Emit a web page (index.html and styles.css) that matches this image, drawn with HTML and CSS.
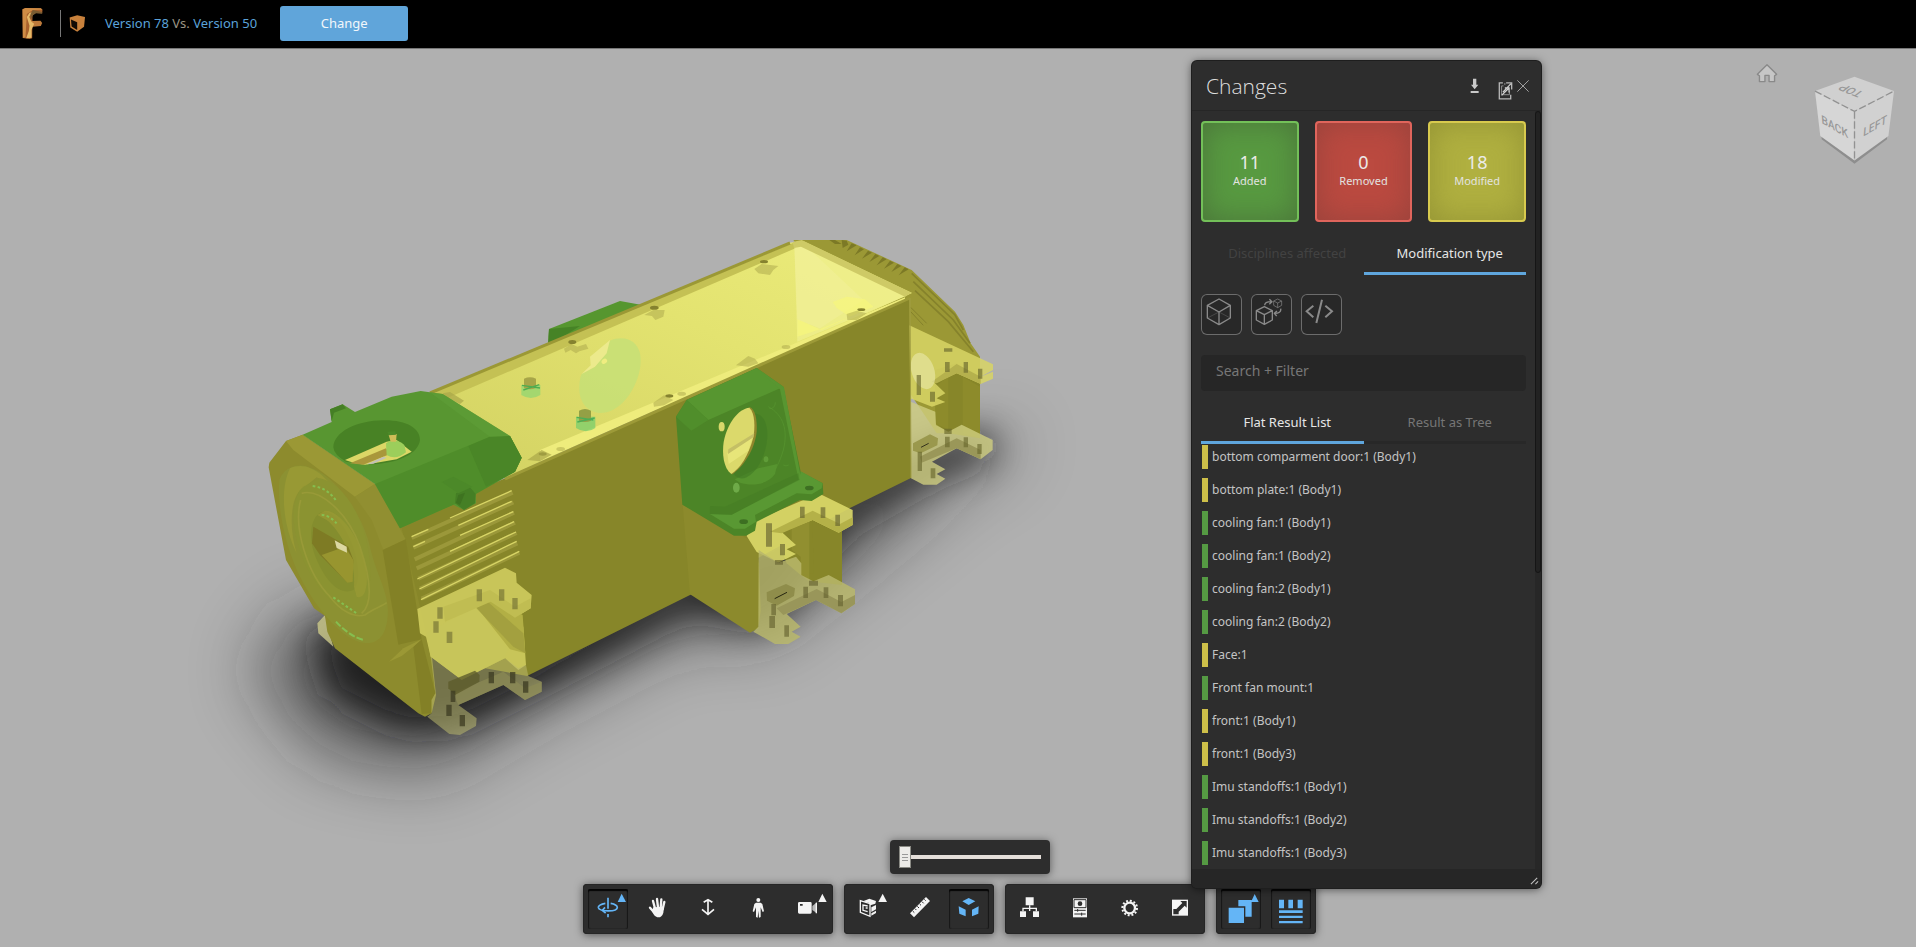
FILE: index.html
```html
<!DOCTYPE html>
<html lang="en">
<head>
<meta charset="utf-8">
<title>Version 78 Vs. Version 50</title>
<link rel="stylesheet" href="styles.css">
</head>
<body>
<header class="topbar">
  <svg class="logo" viewBox="66 22 62 96" aria-label="Fusion" role="img">
    <path fill="#a9622d" d="M67 29 76 25 122 26 127 30 126 41 104 40 97 48 96 116 88 118 68 115Z"/>
    <path fill="#cf8c45" d="M67 29 76 25 122 26 127 30 98 31 80 43 76 113 68 115Z"/>
    <path fill="#bd7a3b" d="M92 64 121 63 126 70 122 79 98 81 90 74Z"/>
    <path fill="#e5b968" d="M104 38 94 42 87 51 94 66 102 72 98 81 94 91 94 114 78 116 86 94 88 78 80 52 88 39Z"/>
    <path fill="#7a5c32" d="M98 31 126 37 126 42 108 41 98 47 92 60 91 43Z"/>
  </svg>
  <span class="rule"></span>
  <svg class="shield" viewBox="205 44 52 52" aria-hidden="true">
    <path fill="#c8813c" d="M207 52 230 45 254 50 251 80 230 95 209 82Z"/>
    <path fill="#120b05" d="M211 58 230 66 230 90 213 79Z"/>
  </svg>
  <p class="versions"><a href="#v78">Version 78</a> Vs. <a href="#v50">Version 50</a></p>
  <button class="change" type="button">Change</button>
</header>

<main class="viewer">
  <svg class="scene" viewBox="0 49 1916 898" preserveAspectRatio="xMinYMin meet" role="img" aria-label="3D model comparison">
    <defs>
      <filter id="b40" x="-40%" y="-60%" width="180%" height="220%"><feGaussianBlur stdDeviation="34"/></filter>
      <filter id="b16" x="-40%" y="-60%" width="180%" height="220%"><feGaussianBlur stdDeviation="18"/></filter>
      <linearGradient id="inner" x1="0" y1="1" x2="1" y2="0">
        <stop offset="0" stop-color="#d2d162"/><stop offset=".6" stop-color="#e3e370"/><stop offset="1" stop-color="#ecec7c"/>
      </linearGradient>
    </defs>

    <g filter="url(#b40)" opacity=".55">
      <path fill="#1c1c1c" d="M250 670 300 610 520 600 700 560 930 470 1010 430 1015 450 960 480 850 570 760 640 690 630 540 710 430 775 320 755Z"/>
    </g>
    <g filter="url(#b16)" opacity=".85">
      <path fill="#161618" d="M312 640 340 620 540 640 690 575 900 460 985 430 995 455 930 482 850 528 765 625 690 610 560 678 460 728 400 730 330 695Z"/>
    </g>

    <!-- rear green fan -->
    <path fill="#56962f" d="M549 329 620 301 642 305 640 320 548 345Z"/>
    <path fill="#468326" d="M549 329 580 326 548 346Z"/>

    <!-- rear cap -->
    <g transform="translate(540 220) scale(.33333)">
      <path fill="#9b9835" d="M760 60 920 60 1115 150 1245 275 1270 315 1292 370 1320 410 1320 640 1190 640 1110 520Z"/>
      <path fill="#7c7926" d="M868 60 885 60 905 72 885 72ZM905 60 920 62 925 74 908 84ZM935 70 950 76 920 94ZM960 82 972 88 944 106ZM984 92 996 98 966 116ZM1006 102 1018 108 988 126ZM1028 112 1040 118 1010 136ZM1050 122 1062 128 1032 146ZM1072 132 1084 138 1054 156ZM1094 142 1106 148 1076 166Z"/>
      <g fill="none" stroke="#85822b" stroke-width="5">
        <path d="M1115 160 1245 285 1270 330"/><path d="M1120 185 1240 300 1290 370"/><path d="M1125 212 1225 305 1300 395"/><path stroke-width="3" d="M1112 262 1160 310M1112 275 1150 316"/>
      </g>
      <path fill="#878629" d="M1185 450 1250 430 1320 480 1320 655 1225 640 1186 610Z"/>
      <path fill="#95932f" d="M1185 500 1225 470 1225 630 1186 610ZM1268 470 1320 500 1320 655 1268 640Z" opacity=".4"/>
      <path fill="#d8d565" fill-opacity=".85" d="M1108 316 1359 433 1359 450 1322 470 1359 455 1359 476 1322 492 1250 460 1185 490 1216 520 1190 535 1216 546 1176 560 1110 535Z"/>
      <path fill="#b5b14d" d="M1175 485 1250 432 1322 470 1322 492 1250 460 1190 490Z"/>
      <ellipse cx="1149" cy="453" rx="34" ry="56" transform="rotate(-18 1149 453)" fill="#e6e4a0" fill-opacity=".7"/>
      <path fill="#d0ce80" fill-opacity=".8" d="M1112 545 1186 575 1188 615 1225 635 1265 614 1358 660 1358 690 1322 718 1250 685 1176 725 1216 748 1190 762 1216 776 1190 794 1150 794 1113 775Z"/>
      <path fill="#9a9759" d="M1140 710 1250 655 1322 690 1322 718 1250 685 1145 728Z"/>
      <path fill="#9a984d" d="M1119 670 1170 643 1194 655 1192 676 1142 700 1119 692Z"/>
      <path stroke="#33321c" stroke-width="3" d="M1143 682 1166 670"/>
      <g fill="#69672d" fill-opacity=".65">
        <path d="M1212 385h25v10h-25zM1215 426h14v30h-14zM1271 426h13v32h-13zM1314 446h13v30h-13zM1130 465h13v60h-13zM1170 515h15v30h-15zM1213 626h22v16h-22zM1215 650h14v32h-14zM1271 652h13v30h-13zM1312 672h13v30h-13zM1133 695h13v58h-13zM1172 745h14v30h-14z"/>
      </g>
    </g>

    <!-- translucent inside of the housing -->
    <path fill="url(#inner)" d="M428 394 788 243 803 241 912 293 540 462 505 478 440 430Z"/>
    <path fill="#c4c154" d="M430 393 793 243 796 248 445 399Z"/>
    <path fill="none" stroke="#9b9835" stroke-width="3" d="M430 393 790 243"/>
    <g transform="translate(540 220) scale(.33333)">
      <path fill="#f2f194" fill-opacity=".6" d="M763 78 800 80 1098 228 772 365Z"/>
      <path fill="#f4f2a4" fill-opacity=".35" d="M800 80 970 240 840 325 772 300 763 78Z"/>
      <path fill="#ceca66" d="M758 66 785 60 1115 218 1095 230 783 80 762 84Z"/>
      <path fill="#f6f67c" fill-opacity=".7" d="M878 246 920 230 975 238 1000 260 840 328 772 350 772 298 800 310 845 330 930 290 890 264Z"/>
      <path fill="#eeec7c" d="M0 690 1095 232 1095 242 0 724Z"/>
      <path fill="#c3e078" fill-opacity=".75" d="M210 362C250 345 290 358 300 400 312 460 270 550 210 574 160 592 120 560 118 510 118 480 122 462 128 460L165 440 185 410Z"/>
      <path fill="#ecea8c" d="M150 410 210 360 200 400 165 440 125 462 152 436Z"/>
      <ellipse cx="193" cy="424" rx="9" ry="7" fill="#efed80" transform="rotate(-40 193 424)"/>
      <g fill="#85822f">
        <ellipse cx="97" cy="366" rx="12" ry="6"/><ellipse cx="343" cy="263" rx="13" ry="6"/><ellipse cx="672" cy="125" rx="12" ry="5"/><ellipse cx="964" cy="269" rx="12" ry="4"/><ellipse cx="388" cy="528" rx="12" ry="5"/><ellipse cx="8" cy="702" rx="12" ry="5"/>
      </g>
      <g fill="#aaa649" fill-opacity=".5">
        <path d="M72 386 95 372 112 380 138 372 145 386 118 394 108 400 92 390 76 398ZM313 285 340 270 374 270 370 290 346 300 336 288ZM643 147 665 132 715 138 700 150 690 165 655 160ZM920 282 950 272 980 280 950 300 922 300ZM588 436 625 408 645 416 655 430 625 440ZM340 548 372 526 400 540 372 556 342 560Z"/>
        <ellipse cx="425" cy="521" rx="13" ry="6"/><ellipse cx="738" cy="381" rx="13" ry="6"/><ellipse cx="62" cy="687" rx="13" ry="6"/>
      </g>
      <path fill="#73cd6c" fill-opacity=".7" d="M108 590h58v34q-28 20-58 0z"/>
      <path fill="#94a045" d="M117 572q18-10 36 0v30q-18 8-36 0z"/>
      <path fill="none" stroke="#4dae55" stroke-width="4" d="M110 592 160 600M112 606 164 594"/>
    </g>
    <g transform="translate(240 360) scale(.33333)">
      <path fill="#85d573" fill-opacity=".65" d="M844 75h57v30q-28 18-57 0z"/>
      <path fill="#a7a548" d="M852 56q18-8 36 0v28q-18 8-36 0z"/>
      <path fill="none" stroke="#4fac50" stroke-width="4" d="M846 76 900 84M850 90 898 74"/>
      <path fill="#aaa649" fill-opacity=".7" d="M608 100 630 96 672 122 660 132 625 115ZM862 300 905 270 935 284 900 304Z"/>
    </g>

    <!-- main face -->
    <path fill="#878629" d="M395 525 520 472 909 298 911 478 850 508 690 595 527 676 440 660 370 640Z"/>
    <path fill="none" stroke="#9d9a38" stroke-width="3" d="M505 479 910 298"/>
    <path stroke="#a19e43" stroke-width="1" d="M910 298 911 478"/>

    <!-- wing under the side fan -->
    <g transform="translate(640 340) scale(.33333)">
      <path fill="#8c8a2c" d="M128 494 330 600 356 640 362 812 355 865 330 878 150 763Z"/>
      <path fill="#878629" d="M425 560 518 520 606 560 606 735 520 725 482 705Z"/>
      <path fill="#878629" d="M400 560 518 530 520 700 482 705 440 670Z"/>
      <path fill="#9b9838" fill-opacity=".5" d="M455 560 508 535 508 725 482 705 482 650 455 630Z"/>
      <path fill="#dbd969" fill-opacity=".9" d="M320 588 350 540 490 480 540 462 638 510 638 555 596 578 518 540 425 576 468 615 440 628 468 642 415 668 350 636Z"/>
      <path fill="#b4b148" d="M390 575 518 512 600 552 638 532 638 555 596 578 518 540 425 580Z"/>
      <path fill="#b9b76b" fill-opacity=".85" d="M356 630 415 668 468 650 484 670 484 705 520 724 566 705 645 748 645 792 604 820 528 780 440 822 482 860 455 875 482 890 445 912 405 912 340 875 355 860Z"/>
      <path fill="#99965a" d="M410 805 530 747 604 786 645 765 645 792 604 820 528 780 430 825Z"/>
      <path fill="#8f8d4b" d="M380 757 438 732 465 745 462 768 410 797 381 782Z"/>
      <path stroke="#24230f" stroke-width="3" d="M404 776 441 757"/>
      <g fill="#656330" fill-opacity=".65">
        <path d="M378 550h18v70h-18zM480 500h14v34h-14zM542 502h14v32h-14zM586 524h14v34h-14zM420 612h15v34h-15zM405 660h24v14h-24zM507 722h27v15h-27zM490 740h14v34h-14zM551 742h14v32h-14zM594 765h15v34h-15zM394 792h14v34h-14zM388 828h17v36h-17zM433 856h14v34h-14z"/>
      </g>
      <path fill="#4c8527" d="M108 230 140 180 350 84 430 140 482 395 548 430 550 462 515 483 480 480 350 545 345 572 318 587 282 587 127 494Z"/>
      <path fill="#579630" d="M140 180 350 84 430 140 205 240Z"/>
      <path fill="#508e2b" d="M140 180 205 240 154 272 108 230Z"/>
      <path fill="#589631" d="M350 84 432 142 484 420 475 416 420 148Z"/>
      <path fill="#599833" d="M210 522 275 524 478 418 482 394 548 430 545 445 515 463 470 460 345 525 348 545 315 566 282 566Z"/>
      <path fill="#437b24" d="M210 498 255 500 475 400 478 420 275 524 210 522Z" opacity=".5"/>
      <path fill="#56942f" d="M284 418 355 385 412 372 405 402C385 432 340 440 300 428Z"/>
      <ellipse cx="325" cy="318" rx="52" ry="100" transform="rotate(16 325 318)" fill="#417a25" opacity=".6"/>
      <path fill="#90862c" d="M328 201C346 206 352 240 350 275 344 330 310 380 275 404Z"/>
      <path fill="#dbd96b" d="M328 203C346 220 345 265 340 292 325 350 300 385 274 402 250 385 246 340 251 306 262 248 296 206 328 203Z"/>
      <path fill="#e7e579" d="M262 340 338 292 325 332 266 372Z"/><path fill="#c4bf65" d="M265 328 343 280 340 292 264 342Z"/>
      <path fill="none" stroke="#589631" stroke-width="2" d="M385 200C430 225 445 270 430 330 420 365 405 395 385 415M388 205a14 18 0 0 0 18-18M430 375a14 14 0 0 0 16 0"/>
      <ellipse cx="245" cy="260" rx="9" ry="14" fill="#d8d76a"/><ellipse cx="289" cy="443" rx="10" ry="15" fill="#6eaa48"/><ellipse cx="378" cy="358" rx="7" ry="9" fill="#5f9c38"/>
      <ellipse cx="508" cy="444" rx="13" ry="7" fill="#3d6f22"/><ellipse cx="311" cy="545" rx="13" ry="7" fill="#3d6f22"/>
    </g>

    <g transform="translate(240 360) scale(.33333)">
      <!-- small foot behind the front plate -->
      <path fill="#c6c387" fill-opacity=".85" d="M232 790 255 765 280 860 235 820Z"/>

      <!-- front plate -->
      <path fill="#8d8b2d" d="M138 243 188 224 405 372 485 505 562 835 576 890 588 1005 575 1060 555 1070 535 1060 285 865 262 815 255 768 222 745 138 600 86 322 88 308Z"/>
      <path fill="#9b9835" d="M138 243 188 224 405 372 345 410 160 270Z"/>
      <path fill="#918f31" d="M405 372 497 538 430 570 395 480 345 410Z"/>
      <path fill="#838126" d="M428 570 497 538 545 838 475 854Z"/>
      <path fill="#838026" d="M520 860 545 838 586 1000 573 1020 573 1060 545 1062Z"/>
      <path fill="#9b9835" d="M447 905 490 865 545 838 520 860 485 888Z"/>
      <path fill="#8c9132" d="M118 360C130 320 180 305 215 325 290 350 370 470 390 560 410 650 450 700 443 770 438 830 410 855 370 848 310 840 230 750 180 650 140 570 110 450 118 360Z"/>
      <path fill="#989934" d="M150 325C180 310 215 320 245 345L270 370 230 352 195 380C150 400 145 500 170 580 130 500 118 390 150 325Z"/>
      <path fill="#8b9331" d="M190 380 240 355C310 370 370 470 385 570 395 640 392 700 375 750 330 800 240 700 200 620 155 530 145 420 190 380Z"/>
      <path fill="none" stroke="#989a38" stroke-width="5" d="M185 400C235 385 320 450 360 560 390 650 400 730 365 760M182 420C160 500 200 640 270 710 300 750 340 775 375 765 400 745 425 740 440 728"/>
      <path fill="#848d2e" d="M215 500C230 440 270 440 310 500 350 560 370 660 340 690 310 705 270 680 240 620 215 570 210 540 215 500Z"/>
      <path fill="#9a9a34" d="M232 465 255 452C300 450 370 540 380 640 384 690 370 720 350 710L342 680C350 600 300 510 260 480Z" opacity=".7"/>
      <path fill="#7e7b24" d="M220 500 325 560 340 600 335 665 320 665 240 585 216 550Z"/>
      <path fill="#98952f" d="M245 585 315 560 340 600 338 665 322 668Z"/>
      <path fill="#dcd8a2" d="M284 541 320 560 321 578 290 564Z"/>
      <g stroke="#83c957" stroke-width="6" stroke-opacity=".8" fill="none" stroke-dasharray="8 7">
        <path d="M218 378C250 382 275 400 290 425"/><path d="M245 465C265 465 280 480 290 490"/><path d="M280 712 350 760"/><path d="M288 785C310 810 345 835 372 840" stroke-dasharray="20 6"/>
      </g>

      <!-- louvres -->
      <g stroke="#9b983a" stroke-width="12"><path d="M515 534 818 398M520 563 820 427M524 598 822 458M530 625 825 488M535 656 830 519M540 686 832 550M545 716 838 578"/></g>
      <g stroke="#d8d566" stroke-width="4"><path d="M515 530 565 508M630 474 815 392M520 560 555 544M655 496 815 424M660 526 820 455M630 574 822 485M532 657 828 516M538 687 830 544M543 719 838 574"/></g>

      <!-- lower front foot -->
      <path fill="#d3d062" fill-opacity=".85" d="M532 747 795 623 828 640 830 668 875 705 872 745 825 773 850 800 858 915 835 930 795 895 665 960 572 890 558 830 540 820Z"/>
      <path fill="#b2af45" d="M705 735 755 710 848 765 856 880 810 868Z"/>
      <path fill="#9f9c3d" d="M705 740 740 722 850 820 856 880 820 860Z" opacity=".8"/>
      <path fill="#c7c55a" d="M560 820 705 740 805 868 795 895 665 960 572 890Z"/>
      <path fill="#c0bd52" d="M610 740 750 690 825 740 872 715 872 745 825 773 752 725 615 785Z"/>
      <path fill="#bab86e" fill-opacity=".55" d="M572 890 665 960 795 895 835 925 858 915 865 948 905 965 905 995 855 1020 790 975 655 1035 710 1075 708 1098 660 1125 628 1122 562 1070 575 1060 575 1020 586 1000Z"/>
      <path fill="#8c8a55" fill-opacity=".7" d="M640 1000 790 935 855 985 905 965 905 995 855 1020 790 975 655 1035Z"/>
      <path fill="#5d5b2a" d="M625 965 705 932 719 945 718 965 645 1005 625 985Z" opacity=".8"/>
      <g fill="#6b6930" fill-opacity=".6">
        <path d="M592 742h16v34h-16zM710 688h16v36h-16zM777 688h16v34h-16zM817 714h16v34h-16zM580 784h16v34h-16zM620 815h17v34h-17z"/>
      </g>
      <g fill="#3c3b22" fill-opacity=".75">
        <path d="M746 936h16v34h-16zM810 936h16v34h-16zM849 964h16v34h-16zM619 1034h16v34h-16zM659 1065h16v34h-16zM632 992h14v34h-14z"/>
      </g>

      <!-- top fan mount -->
      <path fill="#589631" d="M188 224 275 186 270 148 308 133 345 156 455 110 542 93 608 102 810 228 845 293 825 335 707 402 708 430 672 450 640 434 480 505 405 372Z"/>
      <path fill="#4f8d2a" d="M405 372 750 230 810 228 845 293 825 335 707 402 640 434 480 505Z"/>
      <path fill="#4a8627" d="M685 258 750 230 810 228 845 293 825 335 738 380Z"/>
      <path fill="#5e9d37" d="M570 97 608 102 810 228 750 230Z" opacity=".7"/>
      <path fill="#457f25" d="M270 148 308 133 318 145 282 158 275 184ZM648 400 690 382 707 402 705 430 672 450 645 430Z"/>
      <path fill="#3e7320" d="M655 405 675 398 660 435 648 428Z"/><path fill="#4c8929" d="M605 366 640 350 697 380 655 400Z"/>
      <path fill="#488225" d="M280 262C282 215 350 182 430 181 500 180 540 205 540 240 535 280 480 308 400 313L318 305Q282 285 280 262Z"/>
      <path fill="#dcd766" d="M315 300 440 245 470 240 515 275 470 298 375 314 345 310Z"/>
      <path fill="#a9973b" d="M330 310 438 265 450 282 370 314Z"/><path fill="#c2c0b5" d="M380 313 430 290 440 293 400 311Z"/>
      <path fill="#9cce5b" d="M438 250q25-20 55 5l5 22q-30 25-58 8z"/><path fill="#d0bd58" d="M446 225 470 222 468 245 452 245Z"/><path fill="#4c8929" d="M442 215 466 214 468 224 446 226Z"/>
    </g>
  </svg>

  <button class="home" type="button" aria-label="Home">
    <svg viewBox="108 40 64 58"><path d="M140 45 168 73 162 77 162 94 146 94 146 76 134 76 134 94 118 94 118 77 112 73Z" fill="#c6c6c6" stroke="#898989" stroke-width="4" stroke-linejoin="round"/></svg>
  </button>
  <svg class="cube" viewBox="280 70 250 276" role="img" aria-label="View cube">
    <path fill="#8e8e8e" d="M306 258 405 324 503 258 503 266 405 340 306 266Z"/>
    <path fill="#d0d0d0" d="M405 78 524 121 405 182 286 121Z"/>
    <path fill="#d6d6d6" d="M286 121 405 182 405 330 302 256Z"/>
    <path fill="#d1d1d1" d="M524 121 405 182 405 330 507 256Z"/>
    <path fill="none" stroke="#929292" stroke-width="4" stroke-dasharray="22 8" d="M286 121 405 182 524 121M405 182V330"/>
    <g fill="#989898" class="cube-text" text-anchor="middle">
      <text transform="matrix(.86 .5 .08 1 346 240)">BACK</text>
      <text transform="matrix(.86 -.5 -.08 1 466 238)">LEFT</text>
      <text transform="matrix(-.9 -.36 .8 -.62 404 112)">TOP</text>
    </g>
  </svg>

  <section class="dock">
    <div class="explode"><input type="range" min="0" max="100" value="0" aria-label="Explode"></div>
    <nav class="toolbars" aria-label="Viewer tools">
      <div class="group">
        <button class="tool on" type="button" aria-label="Orbit"><svg viewBox="54 177 120 120"><g fill="none" stroke="#64b5f6" stroke-width="5"><path d="M106 220C92 222 84 228 85 233 88 245 140 247 142 233 142 227 134 222 122 220"/><path d="M114 203V236M114 252V262M105 232 97 241 107 249"/></g><path fill="#64b5f6" d="M155 191 168 216H143Z"/></svg></button>
        <button class="tool" type="button" aria-label="Pan"><svg viewBox="204 177 120 120"><g fill="none" stroke="#f4f4f4" stroke-linecap="round" stroke-width="7"><path d="M255 235 249 213M264 232 261 207M272 234 274 208M278 238 283 216M240 233 252 247"/></g><path fill="#f4f4f4" d="M250 232 282 230 280 248C277 258 272 262 265 262 256 262 251 255 246 244Z"/></svg></button>
        <button class="tool" type="button" aria-label="Zoom"><svg viewBox="354 177 120 120"><path fill="none" stroke="#f4f4f4" stroke-width="5" d="M401 217 414 209 427 217M414 210V252M396 238 414 253 432 238"/></svg></button>
        <button class="tool" type="button" aria-label="First person"><svg viewBox="504 177 120 120"><g fill="#f4f4f4"><circle cx="565" cy="210" r="6"/><path d="M558 218H572L577 222 582 244 578 246 572 232 572 261 567 263 565 242 563 263 558 261 558 232 552 246 548 244 553 222Z"/></g></svg></button>
        <button class="tool" type="button" aria-label="Camera"><svg viewBox="654 177 120 120"><path fill="#f4f4f4" fill-rule="evenodd" d="M688 216H721Q725 216 725 220V247Q725 251 721 251H688Q684 251 684 247V220Q684 216 688 216ZM690 222V227H698V222Z"/><path fill="#b8b8b8" d="M727 228 741 217V250L727 240Z"/><path fill="#f4f4f4" d="M757 191 770 216H745ZM737 218h4v32h-4z"/></svg></button>
      </div>
      <div class="group">
        <button class="tool" type="button" aria-label="Section"><svg viewBox="837 177 120 120"><path fill="#f4f4f4" d="M879 214 898 206 918 213 916 221 901 226 898 219ZM904 232 918 225V238L904 246ZM904 250 918 242V249L904 257Z"/><path fill="none" stroke="#f4f4f4" stroke-width="4" d="M871 212 900 221V259L871 247Z"/><path fill="none" stroke="#f4f4f4" stroke-width="4" d="M893 228 879 225V241L893 245M893 234H887"/><path fill="#f4f4f4" d="M938 191 951 216H925Z"/></svg></button>
        <button class="tool" type="button" aria-label="Measure"><svg viewBox="987 177 120 120"><path fill="#f4f4f4" d="M1068 201 1080 213 1032 262 1020 250Z"/><path stroke="#2d2d2d" stroke-width="3" d="M1028 243 1033 248M1035 236 1039 240M1042 229 1047 234M1049 222 1053 226M1056 215 1061 220M1063 208 1067 212"/></svg></button>
        <button class="tool on" type="button" aria-label="Explode model"><svg viewBox="1137 177 120 120"><path fill="#64b5f6" d="M1196 204 1216 214 1196 225 1177 214ZM1166 229 1187 239V259L1168 251ZM1226 229 1206 239V259L1225 251Z"/></svg></button>
      </div>
      <div class="group">
        <button class="tool" type="button" aria-label="Model browser"><svg viewBox="87 56 120 120"><path fill="#f4f4f4" d="M134 81H158V105H134ZM117 123H135V140H117ZM156 123H174V140H156Z"/><path fill="none" stroke="#f4f4f4" stroke-width="4" d="M146 105V122M126 123V114H166V123"/></svg></button>
        <button class="tool" type="button" aria-label="Properties"><svg viewBox="237 56 120 120"><path fill="#f4f4f4" d="M276 84H318V141H276Z"/><path fill="none" stroke="#2d2d2d" stroke-width="3" d="M279 88H315V112H279ZM280 120H314M280 131H314M290 116V124M302 127V136"/><circle cx="297" cy="100" r="7" fill="#2d2d2d"/></svg></button>
        <button class="tool" type="button" aria-label="Settings"><svg viewBox="387 56 120 120"><circle cx="446" cy="113" r="16" fill="none" stroke="#f4f4f4" stroke-width="7"/><circle cx="446" cy="113" r="22" fill="none" stroke="#f4f4f4" stroke-width="6" stroke-dasharray="5.8 5.7"/></svg></button>
        <button class="tool" type="button" aria-label="Full screen"><svg viewBox="537 56 120 120"><path fill="#f4f4f4" d="M573 88H621V136H573Z"/><path fill="#2d2d2d" d="M598 92H617V112L611 106 593 124V132H577V116H586L604 98Z"/></svg></button>
      </div>
      <div class="group">
        <button class="tool on" type="button" aria-label="Compare models"><svg viewBox="719 56 120 120"><path fill="#64b5f6" d="M742 112H788V158H742ZM771 89H811V139H792V108H771ZM820 71 832 95H809Z"/></svg></button>
        <button class="tool on" type="button" aria-label="Changes list"><svg viewBox="869 56 120 120"><path fill="#64b5f6" d="M893 88H908V114H893ZM921 88H935V114H921ZM949 88H964V114H949ZM893 120H964V128H893ZM893 136H964V143H893ZM893 152H964V159H893Z"/></svg></button>
      </div>
    </nav>
  </section>

  <aside class="panel">
    <header class="panel-head">
      <h1>Changes</h1>
      <button class="head-btn save" type="button" aria-label="Download"><svg viewBox="873 80 30 46"><path fill="#c9c9c9" d="M882 82H892V100H898L887 114 876 100H882ZM875 119H899V125H875Z"/></svg></button>
      <button class="head-btn export" type="button" aria-label="Export"><svg viewBox="955 92 46 60"><path fill="none" stroke="#b8b8b8" stroke-width="4" d="M970 98H959V147H994V134M980 98H997V118"/><path fill="none" stroke="#909090" stroke-width="3" d="M972 107H966V134H990V124M976 98V104"/><path fill="none" stroke="#d0d0d0" stroke-width="4" d="M970 126 995 100M966 136 988 114M976 113H989V127"/></svg></button>
      <button class="head-btn close" type="button" aria-label="Close"><svg viewBox="1010 88 36 36"><path stroke="#a0a0a0" stroke-width="3" d="M1011 89 1045 123M1045 89 1011 123"/></svg></button>
    </header>
    <div class="panel-body">
      <div class="content">
        <div class="cards">
          <button class="card added" type="button"><strong>11</strong><span>Added</span></button>
          <button class="card removed" type="button"><strong>0</strong><span>Removed</span></button>
          <button class="card modified" type="button"><strong>18</strong><span>Modified</span></button>
        </div>
        <div class="tabs kinds">
          <button class="tab off" type="button" disabled>Disciplines affected</button>
          <button class="tab current" type="button">Modification type</button>
        </div>
        <div class="filters">
          <button class="filter" type="button" aria-label="Geometry"><svg viewBox="63 42 123 123"><g fill="none" stroke="#8a8a8a" stroke-width="4" stroke-linejoin="round"><path d="M117 57 151 76V114L117 134 82 114V76ZM82 76 117 96 151 76M117 96V134"/><path stroke-width="1" d="M82 114 117 96 151 114"/></g></svg></button>
          <button class="filter" type="button" aria-label="Transform"><svg viewBox="213 42 123 123"><g fill="none" stroke="#8a8a8a" stroke-width="4" stroke-linejoin="round"><path d="M253 80 277 92V120L253 133 229 120V92ZM229 92 253 104 277 92M253 104V133"/><path stroke-width="2" d="M293 57 305 63V76L293 83 281 76V63ZM281 63 293 69 305 63M293 69V83"/><path d="M254 76C254 68 262 65 274 65M268 58 276 65 268 73M302 86C304 96 296 100 284 100M291 93 283 100 290 108"/></g></svg></button>
          <button class="filter" type="button" aria-label="Properties"><svg viewBox="363 42 123 123"><path fill="none" stroke="#8a8a8a" stroke-width="6" d="M400 77 380 94 400 112M436 77 456 94 436 112M426 59 409 129"/></svg></button>
        </div>
        <input class="search" type="text" placeholder="Search + Filter" aria-label="Search and filter">
        <div class="tabs views">
          <button class="tab current" type="button">Flat Result List</button>
          <button class="tab" type="button">Result as Tree</button>
        </div>
        <ul class="results">
          <li class="mod">bottom comparment door:1 (Body1)</li>
          <li class="mod">bottom plate:1 (Body1)</li>
          <li class="add">cooling fan:1 (Body1)</li>
          <li class="add">cooling fan:1 (Body2)</li>
          <li class="add">cooling fan:2 (Body1)</li>
          <li class="add">cooling fan:2 (Body2)</li>
          <li class="mod">Face:1</li>
          <li class="add">Front fan mount:1</li>
          <li class="mod">front:1 (Body1)</li>
          <li class="mod">front:1 (Body3)</li>
          <li class="add">Imu standoffs:1 (Body1)</li>
          <li class="add">Imu standoffs:1 (Body2)</li>
          <li class="add">Imu standoffs:1 (Body3)</li>
        </ul>
      </div>
      <div class="scrollbar"><div class="thumb"></div></div>
    </div>
    <footer class="panel-foot"><svg viewBox="0 0 10 10" aria-hidden="true"><path stroke="#c0c0c0" stroke-width="1.2" d="M1 9 8 2M6 9 9 6"/></svg></footer>
  </aside>
</main>
</body>
</html>
```

FILE: styles.css
```css
* { box-sizing: border-box; }

body {
  margin: 0;
  height: 100vh;
  display: flex;
  flex-direction: column;
  overflow: hidden;
  background: #b0b0b0;
  color: #c4c4c4;
  font-family: "Noto Sans", "Open Sans", sans-serif;
  font-size: 13px;
}

button {
  margin: 0;
  padding: 0;
  border: 0;
  background: none;
  color: inherit;
  font: inherit;
}

svg { display: block; }

.topbar {
  flex: none;
  display: flex;
  align-items: center;
  height: 49px;
  padding: 0 22px 2px;
  background: #000;
  border-bottom: 1px solid #777;
}

.logo { width: 21px; height: 32px; }
.rule { width: 1px; height: 27px; margin: 0 8px 0 17px; background: #777; }
.shield { width: 17px; height: 17px; }
.versions { margin: 0 23px 0 19px; color: #9b9484; white-space: nowrap; }
.versions a { color: #5ba3d9; text-decoration: none; }

.change {
  width: 128px;
  height: 35px;
  border-radius: 3px;
  background: #60a5da;
  color: #f2f7fb;
}

.viewer {
  position: relative;
  flex: 1;
  min-height: 0;
  background: #b0b0b0;
}

.scene { position: absolute; inset: 0; width: 100%; height: 100%; }

.home { position: absolute; top: 14px; right: 138px; width: 22px; }
.cube { position: absolute; top: 25px; right: 20px; width: 83px; height: 92px; }
.cube-text { font: 500 36px Roboto, sans-serif; }

.dock {
  position: absolute;
  left: 0;
  right: 18px;
  bottom: 13px;
  display: flex;
  flex-direction: column;
  align-items: center;
  gap: 10px;
}

.explode {
  display: flex;
  align-items: center;
  width: 160px;
  height: 34px;
  margin-left: 42px;
  padding: 0 9px;
  border-radius: 4px;
  background: #2d2d2d;
  box-shadow: 0 1px 8px rgba(0, 0, 0, .5);
}

.explode input {
  appearance: none;
  width: 100%;
  height: 22px;
  margin: 0;
  background: linear-gradient(#e5dfda, #e5dfda) center / 100% 4px no-repeat;
}

.explode input::-webkit-slider-thumb {
  appearance: none;
  width: 12px;
  height: 22px;
  border: 1px solid #8a8a84;
  background: linear-gradient(#999, #999) center 7px / 6px 1px no-repeat,
    linear-gradient(#999, #999) center 10px / 6px 1px no-repeat,
    linear-gradient(#999, #999) center 13px / 6px 1px no-repeat,
    #ecebe8;
}

.toolbars { display: flex; gap: 11px; }

.group {
  display: flex;
  gap: 10px;
  padding: 5px;
  border-radius: 4px;
  background: #2d2d2d;
  box-shadow: 0 1px 8px rgba(0, 0, 0, .55), inset 0 0 0 1px #262626;
}

.tool { width: 40px; height: 40px; }
.tool.on { border-radius: 2px; box-shadow: inset 0 2px 1px #050505, inset 1px 0 1px #1a1a1a, inset -1px 0 1px #1a1a1a; }

.panel {
  position: absolute;
  top: 12px;
  right: 375px;
  bottom: 59px;
  width: 349px;
  display: flex;
  flex-direction: column;
  overflow: hidden;
  border-radius: 5px;
  background: #2d2d2d;
  box-shadow: 0 0 0 1px #1e1e1e, 0 1px 10px rgba(0, 0, 0, .6);
}

.panel-head {
  flex: none;
  display: flex;
  align-items: center;
  height: 50px;
  padding: 0 12px 0 14px;
  border-bottom: 1px solid #262626;
}

.panel-head h1 {
  flex: 1;
  margin: 0;
  color: #dedede;
  font: 300 21px "Open Sans", sans-serif;
}

.save { width: 10px; }
.export { width: 15px; margin: 10px 4px 0 18px; }
.close { width: 12px; }

.panel-body { flex: 1; min-height: 0; display: flex; overflow: hidden; }
.content { flex: 1; min-width: 0; padding: 10px 9px 0; }

.scrollbar { width: 6px; background: #272727; }
.thumb { height: 61%; border: 1px solid #151515; border-radius: 3px; background: #222; }

.cards { display: grid; grid-template-columns: repeat(3, 1fr); gap: 16px; }

.card {
  display: flex;
  flex-direction: column;
  align-items: center;
  justify-content: center;
  height: 101px;
  padding-bottom: 4px;
  border: 2px solid;
  border-radius: 4px;
  font-size: 11px;
}

.card span { color: #e3e3e0; line-height: 16px; }
.card strong { color: #ebebe8; font-size: 18px; font-weight: 400; line-height: 22px; }
.added { border-color: #73c059; background: #589a41; box-shadow: inset 0 0 30px rgba(60, 80, 50, .5); }
.removed { border-color: #e0655c; background: #bb4a40; box-shadow: inset 0 0 30px rgba(120, 60, 55, .5); }
.modified { border-color: #d8ca4e; background: #b0b040; box-shadow: inset 0 0 30px rgba(120, 120, 40, .5); }

.tabs { display: grid; grid-template-columns: 1fr 1fr; margin-top: 17px; }

.tab {
  height: 36px;
  padding: 0 0 6px 10px;
  border-bottom: 3px solid #282828;
  color: #767676;
  white-space: nowrap;
}

.tab.off { border-color: transparent; color: #424242; }
.tab.current { border-color: #5fa6dd; color: #e6e6e6; }

.filters { display: flex; gap: 9px; margin: 19px 0 20px; }

.filter {
  width: 41px;
  height: 41px;
  border-radius: 6px;
  background: #282828;
  box-shadow: inset 0 0 0 1px #6c6c6c;
}

.search {
  display: block;
  width: 100%;
  height: 36px;
  padding: 0 15px 5px;
  border: 0;
  border-radius: 4px;
  background: #262626;
  color: #ccc;
  font: inherit;
  font-size: 14px;
}

.search::placeholder { color: #777; opacity: 1; }

.results {
  display: flex;
  flex-direction: column;
  gap: 9px;
  margin: 1px 0 0 1px;
  padding: 0;
  list-style: none;
  font-size: 12px;
}

.results li { height: 24px; padding-left: 4px; border-left: 6px solid; line-height: 23px; }
.results .mod { border-image: linear-gradient(#cdbf49, #cdbf49) 1; }
.results .add { border-image: linear-gradient(#559a43, #559a43) 1; }

.panel-foot {
  flex: none;
  display: flex;
  align-items: flex-end;
  justify-content: flex-end;
  height: 19px;
  padding: 0 2px 3px 0;
  background: #262626;
}

.panel-foot svg { width: 9px; height: 9px; }
```
